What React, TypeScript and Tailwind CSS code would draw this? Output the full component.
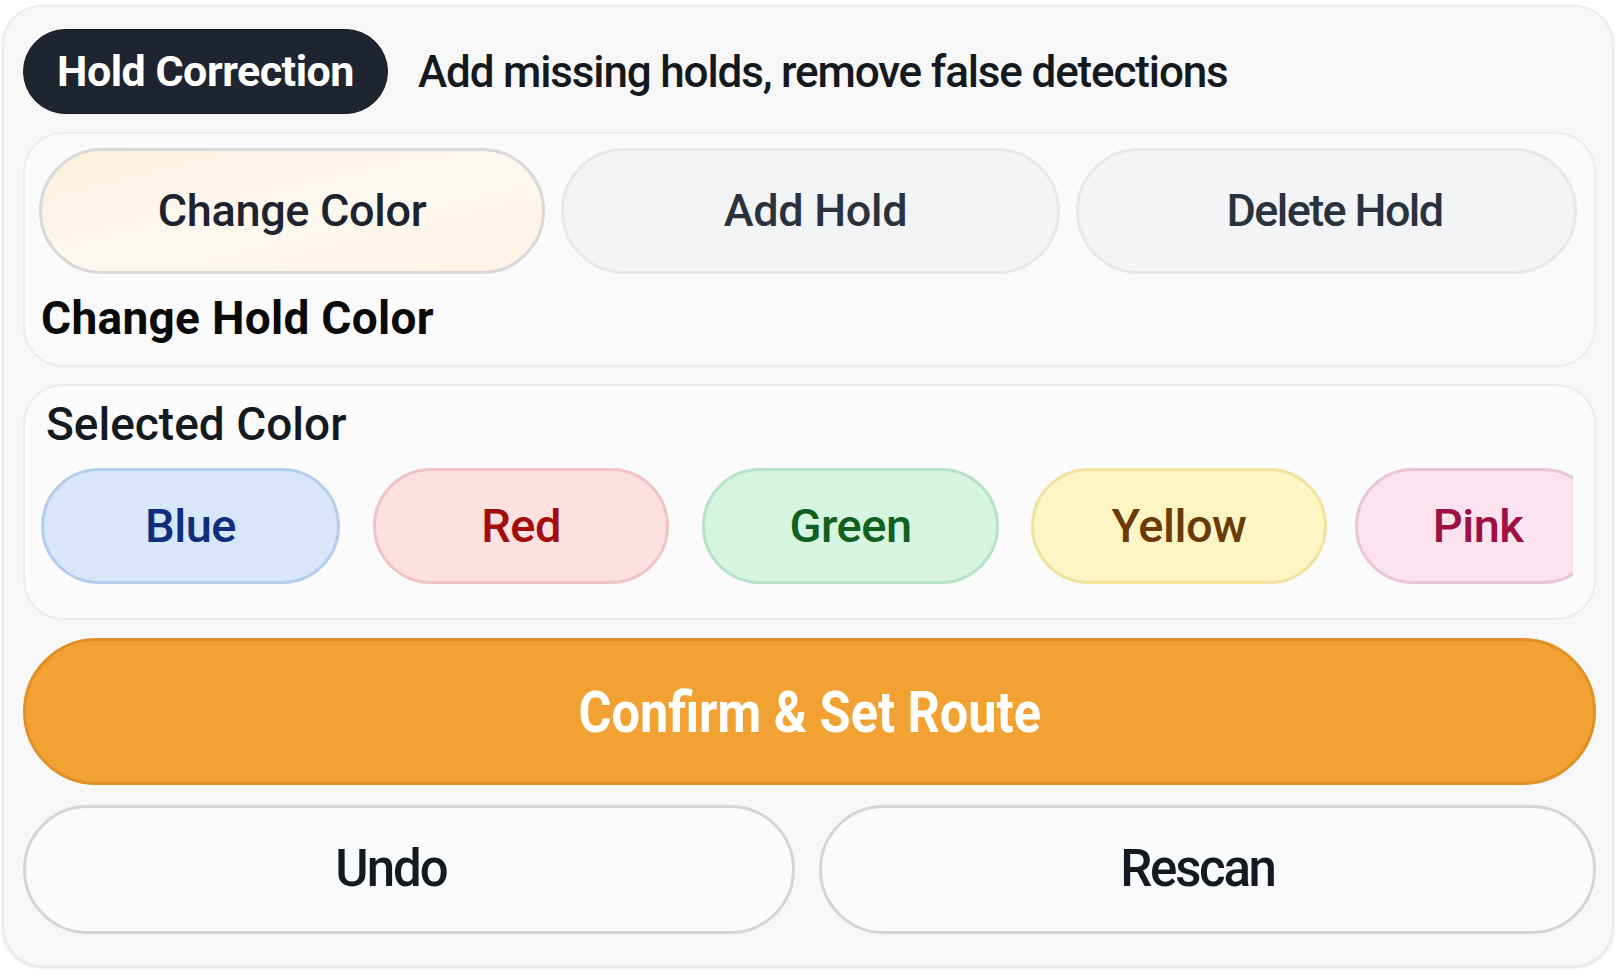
import React from "react";

const colors = [
  { name: "Blue", cls: "w-[299px] bg-[#d7e6f9] border-[#b5cdec] text-[#0f2f7c]" },
  { name: "Red", cls: "w-[296px] ml-[33px] bg-[#fde0e0] border-[#f1c3c3] text-[#a30d0d]" },
  { name: "Green", cls: "w-[297px] ml-[33px] bg-[#d6f5e1] border-[#b7e2c7] text-[#12601e]" },
  { name: "Yellow", cls: "w-[296px] ml-[32px] bg-[#fef5c4] border-[#f1e29c] text-[#6a3b06]" },
  { name: "Pink", cls: "w-[246px] ml-[28px] bg-[#fbe2ef] border-[#eac4d7] text-[#9c1044]" },
];

export default function App() {
  return (
    <div className="w-[1619px] h-[971px] bg-white p-[2px] pt-[5px] font-['Roboto',sans-serif]">
      <div className="w-[1612px] h-[962px] rounded-[40px] border-2 border-[#ececec] bg-[#f7f7f7] pl-[19px] pr-[16px] pt-[22px] flex flex-col shadow-sm">
        <div className="flex items-center gap-[30px] h-[85px] shrink-0">
          <div className="h-[85px] w-[365px] shrink-0 rounded-full bg-[#1e2530] border border-[#11161d] flex items-center justify-center text-white font-bold text-[43px] tracking-[-0.5px]">
            Hold Correction
          </div>
          <div className="text-[44px] font-medium text-[#141920] tracking-[-1.15px] whitespace-nowrap">
            Add missing holds, remove false detections
          </div>
        </div>

        <div className="mt-[18px] h-[235px] rounded-[40px] border-2 border-[#ececec] bg-[#fafafa] pl-[14px] pr-[17px] pt-[14px] flex flex-col shrink-0">
          <div className="flex gap-[16px]">
            <button className="h-[126px] w-[506px] shrink-0 rounded-full border-[3px] border-[#d9d9d9] bg-gradient-to-br from-[#fbf0dc] via-[#fdf8ef] to-[#fcf3e2] text-[#1d2430] text-[45px] font-medium tracking-[-0.3px]">
              Change Color
            </button>
            <button className="h-[126px] w-[499px] shrink-0 rounded-full border-[3px] border-[#e7e8ea] bg-[#f3f4f5] pl-[10px] text-[#2a323d] text-[45px] font-medium tracking-[-0.3px]">
              Add Hold
            </button>
            <button className="h-[126px] flex-1 rounded-full border-[3px] border-[#e7e8ea] bg-[#f3f4f5] pl-[16px] text-[#2a323d] text-[45px] font-medium tracking-[-1.6px]">
              Delete Hold
            </button>
          </div>
          <div className="mt-[17px] pl-[2px] text-[46px] font-bold text-[#0a0a0a] leading-[1.2] tracking-[0.3px]">
            Change Hold Color
          </div>
        </div>

        <div className="mt-[17px] h-[236px] rounded-[40px] border-2 border-[#ececec] bg-[#fbfbfb] pl-[16px] pr-[21px] pt-[11px] flex flex-col shrink-0">
          <div className="pl-[5px] text-[46px] font-medium text-[#141a22] leading-[1.2]">
            Selected Color
          </div>
          <div className="mt-[16px] overflow-hidden">
            <div className="flex">
              {colors.map((c) => (
                <button
                  key={c.name}
                  className={`h-[116px] shrink-0 rounded-full border-[3px] text-[47px] font-medium tracking-[-0.5px] ${c.cls}`}
                >
                  {c.name}
                </button>
              ))}
            </div>
          </div>
        </div>

        <button className="mt-[18px] h-[147px] shrink-0 rounded-full border-[3px] border-[#df9126] bg-[#f2a233] text-white font-bold flex items-center justify-center">
          <span className="inline-block text-[58px] leading-none scale-x-[0.87]">
            Confirm &amp; Set Route
          </span>
        </button>

        <div className="mt-[20px] flex gap-[24px] shrink-0">
          <button className="h-[129px] w-[772px] shrink-0 rounded-full border-[3px] border-[#d4d5d7] bg-[#fbfbfb] pr-[36px] text-[#141a22] text-[51px] font-medium tracking-[-2px]">
            Undo
          </button>
          <button className="h-[129px] flex-1 rounded-full border-[3px] border-[#d4d5d7] bg-[#fbfbfb] pr-[20px] text-[#141a22] text-[51px] font-medium tracking-[-2.3px]">
            Rescan
          </button>
        </div>
      </div>
    </div>
  );
}
